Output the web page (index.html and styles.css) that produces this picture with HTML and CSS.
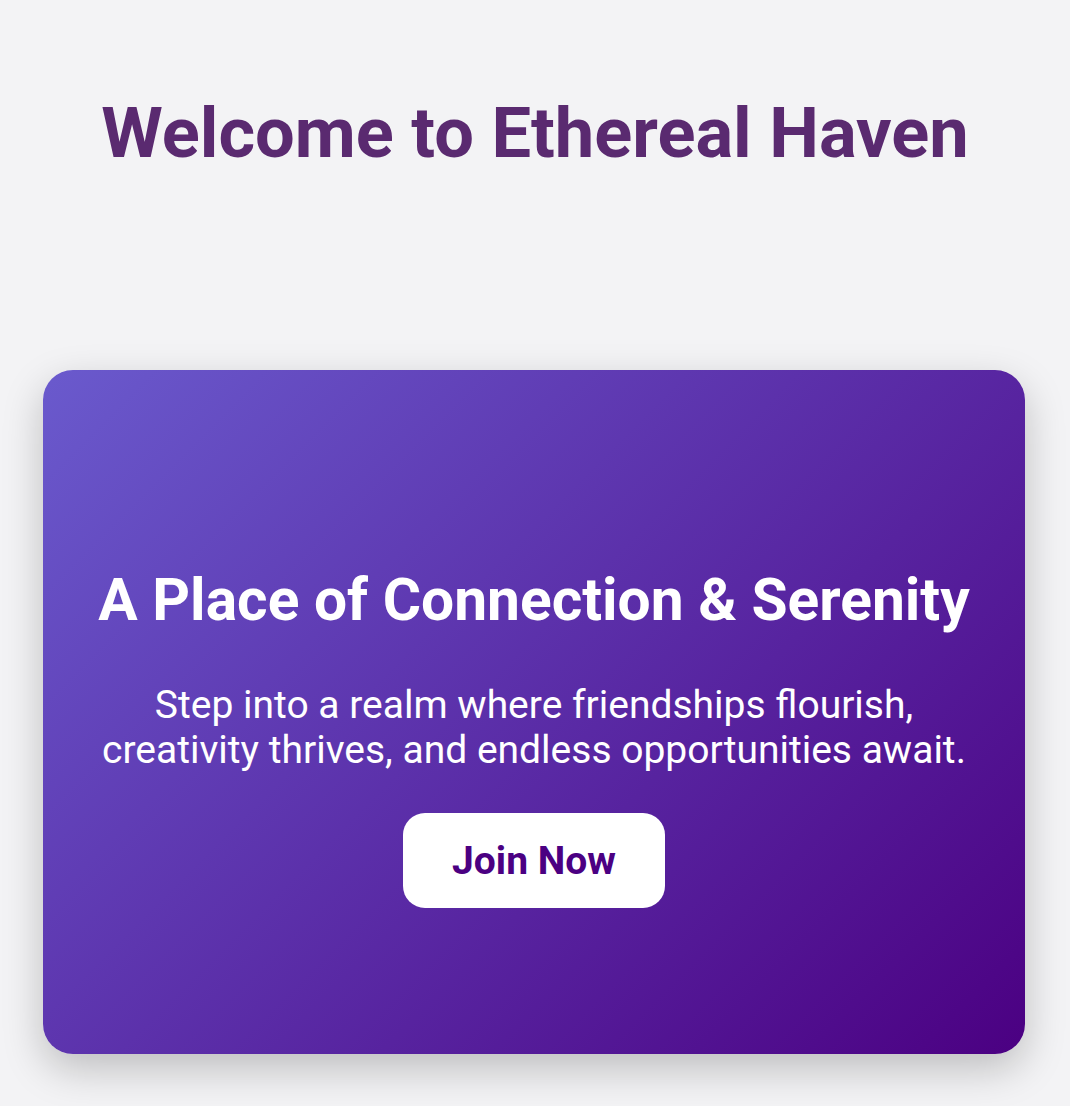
FILE: index.html
```html
<!DOCTYPE html>
<html lang="en">
<head>
<meta charset="utf-8">
<title>Ethereal Haven</title>
<link rel="stylesheet" href="styles.css">
</head>
<body>
<header class="site-header">
  <h1 class="site-title">Welcome to Ethereal Haven</h1>
</header>
<main class="main">
  <section class="hero">
    <h2 class="hero-title">A Place of Connection &amp; Serenity</h2>
    <p class="hero-text">Step into a realm where friendships flourish,<br>creativity thrives, and endless opportunities await.</p>
    <a class="hero-btn" href="#">Join Now</a>
  </section>
</main>
</body>
</html>
```
FILE: styles.css
```css
* { box-sizing: border-box; }
html, body { margin: 0; padding: 0; }
body {
  background: #f3f3f5;
  font-family: Roboto, "Liberation Sans", sans-serif;
  height: 1106px;
  overflow: hidden;
}
.site-header {
  display: flex;
  justify-content: center;
  padding-top: 91px;
  height: 370px;
}
.site-title {
  margin: 0;
  font-size: 70.4px;
  font-weight: 700;
  line-height: 84px;
  color: #5a2a70;
}
.main {
  display: flex;
  padding: 0 45px 0 43px;
}
.hero {
  flex: 1;
  height: 684px;
  border-radius: 30px;
  background: linear-gradient(135deg, #6a5acd 0%, #4b0082 100%);
  box-shadow: 0 15px 40px rgba(0,0,0,0.22);
  display: flex;
  flex-direction: column;
  align-items: center;
  padding-top: 195px;
  color: #fff;
  text-align: center;
}
.hero-title {
  margin: 0;
  font-size: 58.7px;
  font-weight: 700;
  line-height: 70px;
}
.hero-text {
  margin: 48px 0 40px;
  font-size: 39px;
  line-height: 45px;
}
.hero-btn {
  display: flex;
  align-items: center;
  justify-content: center;
  width: 262px;
  height: 95px;
  background: #fff;
  border-radius: 22px;
  color: #4b0082;
  font-size: 39px;
  font-weight: 700;
  text-decoration: none;
}
```
